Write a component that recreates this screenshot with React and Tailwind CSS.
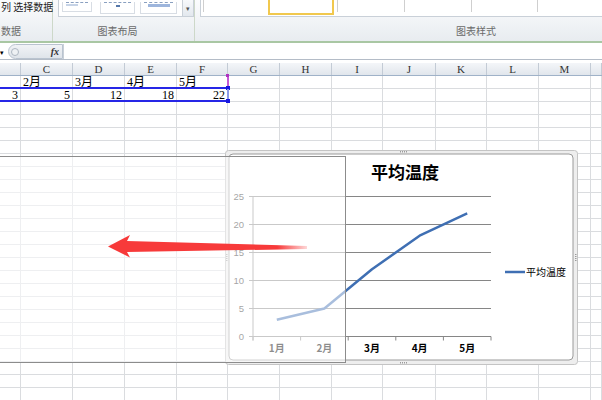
import React from "react";

const COLS = [
  { l: "", w: 21 },
  { l: "C", w: 52 },
  { l: "D", w: 52 },
  { l: "E", w: 52 },
  { l: "F", w: 51 },
  { l: "G", w: 52 },
  { l: "H", w: 52 },
  { l: "I", w: 51 },
  { l: "J", w: 53 },
  { l: "K", w: 51 },
  { l: "L", w: 52 },
  { l: "M", w: 52 },
  { l: "", w: 11 },
];

const ROW1 = ["", "2月", "3月", "4月", "5月"];
const ROW2 = ["3", "5", "12", "18", "22"];

// chart data, local coords inside the chart frame
const MONTHS = ["1月", "2月", "3月", "4月", "5月"];
const VALUES = [3, 5, 12, 18, 22];
const X0 = 28;
const STEP = 47.6;
const Y0 = 186.5;
const yOf = (v) => Y0 - v * 5.6;

function Ribbon() {
  return (
    <div className="relative h-[43px] bg-gradient-to-b from-[#fbfcfd] to-[#e8ecf0] border-b-2 border-[#a9c7a3] overflow-hidden">
      <div className="flex h-full">
        {/* data group */}
        <div className="w-[53px] h-full flex flex-col justify-between border-r border-[#cdd8c9]">
          <div className="text-[10px] leading-[11px] mt-[1px] whitespace-nowrap pl-[1px] text-[#222]">列 选择数据</div>
          <div className="text-[10px] leading-[12px] mb-[4px] pl-[1px] text-[#6a6a6a]">数据</div>
        </div>
        {/* layout group */}
        <div className="w-[142px] h-full flex flex-col justify-between border-r border-[#cdd8c9]">
          <div className="flex ml-[5px] h-[17px] border border-t-0 border-[#c9d0d8] bg-white">
            <div className="w-[30px] mt-[2px] ml-[3px] h-[10px] border border-t-0 border-[#d8dde4] flex flex-col gap-[1px] px-[3px]">
              <div className="h-[1px] w-full border-t border-dashed border-[#8aa0c0]" />
              <div className="h-[2px] w-[12px] bg-[#c6d3e6]" />
            </div>
            <div className="w-[35px] mt-[2px] ml-[8px] h-[12px] border border-t-0 border-[#d8dde4] flex flex-col gap-[2px] px-[3px]">
              <div className="h-[1px] w-full border-t border-dashed border-[#8aa0c0]" />
              <div className="h-[2px] w-[4px] mx-auto bg-[#5577aa]" />
            </div>
            <div className="w-[37px] mt-[2px] ml-[5px] h-[12px] border border-t-0 border-[#d8dde4] flex flex-col gap-[1px] px-[3px]">
              <div className="h-[1px] w-full border-t border-dashed border-[#8aa0c0]" />
              <div className="h-[3px] w-[22px] mx-auto bg-[#9db5dc]" />
            </div>
            <div className="ml-auto w-[11px] border-l border-[#c9d0d8] bg-gradient-to-b from-[#f7f9fb] to-[#e3e8ee] text-[7px] leading-[16px] text-center text-[#555]">▾</div>
          </div>
          <div className="text-[10px] leading-[12px] mb-[4px] text-center text-[#6a6a6a] pr-[12px]">图表布局</div>
        </div>
        {/* style group */}
        <div className="flex-1 h-full flex flex-col justify-between pl-[5px]">
          <div className="relative h-[17px] border border-t-0 border-r-0 border-[#c9d0d8] bg-white">
            <div className="absolute left-[2px] top-0 h-[12px] border-l border-[#cfcfcf]" />
            <div className="absolute left-[67px] top-0 w-[66px] h-[15px] border-2 border-t-0 border-[#f1c84e] bg-white" />
            <div className="absolute left-[136px] top-0 h-[12px] border-l border-[#cfcfcf]" />
            <div className="absolute left-[203px] top-0 h-[12px] border-l border-[#cfcfcf]" />
            <div className="absolute left-[270px] top-0 h-[12px] border-l border-[#cfcfcf]" />
            <div className="absolute left-[336px] top-0 h-[12px] border-l border-[#cfcfcf]" />
          </div>
          <div className="text-[10px] leading-[12px] mb-[4px] pl-[256px] text-[#6a6a6a]">图表样式</div>
        </div>
      </div>
    </div>
  );
}

function FormulaBar() {
  return (
    <div className="flex h-[16px] bg-white border-b border-[#b4bcc7] mt-[1px]">
      <div className="w-[8px] text-[7px] leading-[16px] text-black">▾</div>
      <div className="w-[55px] h-[15px] rounded-l-full border border-[#b9c3cf] bg-gradient-to-b from-[#f1f3f6] to-[#dfe4ea] flex items-center">
        <div className="w-[8px] h-[8px] ml-[2px] rounded-full border border-[#aeb7c2] bg-[#eef1f4]" />
        <span className="ml-auto mr-[3px] text-[10px] italic font-bold text-[#333] [font-family:'Liberation_Serif',serif]">fx</span>
      </div>
      <div className="flex-1 border-l border-[#c9d0d8]" />
    </div>
  );
}

function Grid() {
  const rows = Array.from({ length: 25 }, (_, i) => i);
  return (
    <div className="mt-[3px] [font-family:'Liberation_Serif','Noto_Sans_CJK_SC',serif]">
      <div className="flex h-[13px] bg-gradient-to-b from-[#f4f6f9] to-[#e1e6ec] border-b border-[#9fb2c8]">
        {COLS.map((c, i) => (
          <div
            key={i}
            style={{ width: c.w }}
            className="shrink-0 h-full border-r border-[#c3cbd5] text-[11px] leading-[13px] text-center text-[#333]"
          >
            {c.l}
          </div>
        ))}
      </div>
      {rows.map((r) => (
        <div key={r} className="flex h-[13px]">
          {COLS.map((c, i) => {
            let txt = "";
            let right = false;
            if (r === 0 && i < 5) txt = ROW1[i];
            if (r === 1 && i < 5) {
              txt = ROW2[i];
              right = true;
            }
            return (
              <div
                key={i}
                style={{ width: c.w }}
                className={
                  "shrink-0 h-full border-r border-b border-[#dadcdf] text-[12px] leading-[13px] text-black px-[2px] whitespace-nowrap overflow-hidden " +
                  (right ? "text-right" : "text-left")
                }
              >
                {txt}
              </div>
            );
          })}
        </div>
      ))}
    </div>
  );
}

function Chart() {
  const pts = VALUES.map((v, i) => `${X0 + STEP * (i + 0.5)},${yOf(v)}`).join(" ");
  return (
    <svg
      className="absolute left-[225px] top-[150px]"
      width="353"
      height="216"
      viewBox="0 0 353 216"
    >
      <rect x="0.5" y="0.5" width="352" height="214" rx="3" fill="#eeeeee" stroke="#c4c4c4" />
      <rect x="4" y="4" width="344" height="206" rx="4" fill="#ffffff" stroke="#9a9a9a" />
      {/* handles */}
      <g fill="#9a9a9a">
        {[0, 2, 4, 6].map((d) => (
          <rect key={"t" + d} x={175 + d} y="1" width="1" height="1.5" />
        ))}
        {[0, 2, 4, 6].map((d) => (
          <rect key={"b" + d} x={175 + d} y="212" width="1" height="1.5" />
        ))}
        {[0, 2, 4, 6].map((d) => (
          <rect key={"r" + d} x="350" y={104 + d} width="1.5" height="1" />
        ))}
        {[0, 2, 4, 6].map((d) => (
          <rect key={"l" + d} x="1" y={104 + d} width="1.5" height="1" />
        ))}
      </g>
      <text
        x="180"
        y="29"
        textAnchor="middle"
        fontSize="17"
        fontWeight="bold"
        fill="#000"
        fontFamily="'Noto Sans CJK SC', sans-serif"
      >
        平均温度
      </text>
      {[0, 5, 10, 15, 20, 25].map((v) => (
        <g key={v}>
          <line x1={X0} x2={266} y1={yOf(v)} y2={yOf(v)} stroke="#868686" strokeWidth="1" />
          <line x1={X0 - 4} x2={X0} y1={yOf(v)} y2={yOf(v)} stroke="#868686" />
          <text
            x={X0 - 9}
            y={yOf(v) + 3.5}
            textAnchor="end"
            fontSize="9.5"
            fill="#333"
            fontFamily="'Liberation Sans', sans-serif"
          >
            {v}
          </text>
        </g>
      ))}
      <line x1={X0} x2={X0} y1={yOf(25)} y2={Y0 + 4} stroke="#868686" />
      {[0, 1, 2, 3, 4, 5].map((i) => (
        <line key={i} x1={X0 + STEP * i} x2={X0 + STEP * i} y1={Y0} y2={Y0 + 4} stroke="#868686" />
      ))}
      {MONTHS.map((m, i) => (
        <text
          key={m}
          x={X0 + STEP * (i + 0.5)}
          y="202"
          textAnchor="middle"
          fontSize="10"
          fontWeight="bold"
          fill="#000"
          fontFamily="'Noto Sans CJK SC', sans-serif"
        >
          {m}
        </text>
      ))}
      <polyline points={pts} fill="none" stroke="#3f6fb3" strokeWidth="2.5" strokeLinejoin="round" />
      <line x1="280" x2="300" y1="122" y2="122" stroke="#3f6fb3" strokeWidth="2.5" />
      <text x="301" y="126" fontSize="10" fill="#000" fontFamily="'Noto Sans CJK SC', sans-serif">
        平均温度
      </text>
    </svg>
  );
}

function Arrow() {
  return (
    <svg className="absolute left-[100px] top-[230px]" width="215" height="35" viewBox="0 0 215 35">
      <defs>
        <linearGradient id="fade" x1="0" x2="1" y1="0" y2="0">
          <stop offset="0" stopColor="#f73a3a" />
          <stop offset="0.85" stopColor="#f73a3a" />
          <stop offset="1" stopColor="#f73a3a" stopOpacity="0.2" />
        </linearGradient>
      </defs>
      <polygon
        points="8,16.5 30,5 27,11 207,16 207,19 27,22 30,27.5"
        fill="url(#fade)"
      />
    </svg>
  );
}

function Selection() {
  return (
    <>
      <div className="absolute left-0 top-[87px] w-[228px] h-[2px] bg-[#2626e6]" />
      <div className="absolute left-0 top-[100px] w-[228px] h-[2px] bg-[#2626e6]" />
      <div className="absolute left-[227px] top-[75px] w-[2px] h-[13px] bg-[#c45ad6]" />
      <div className="absolute left-[226px] top-[74px] w-[3px] h-[3px] bg-[#b030c0]" />
      <div className="absolute left-[226px] top-[86px] w-[4px] h-[4px] bg-[#1818e0]" />
      <div className="absolute left-[227px] top-[89px] w-[2px] h-[11px] bg-[#8a9ae8]" />
      <div className="absolute left-[226px] top-[99px] w-[4px] h-[4px] bg-[#1818e0]" />
    </>
  );
}

export default function App() {
  return (
    <div className="relative w-[602px] h-[400px] overflow-hidden bg-white [font-family:'Noto_Sans_CJK_SC',sans-serif]">
      <Ribbon />
      <FormulaBar />
      <Grid />
      <Selection />
      <Chart />
      {/* translucent mask over the left half */}
      <div className="absolute left-[-1px] top-[156px] w-[347px] h-[207px] bg-white/55 border border-[#8c8c8c]" />
      <Arrow />
    </div>
  );
}
